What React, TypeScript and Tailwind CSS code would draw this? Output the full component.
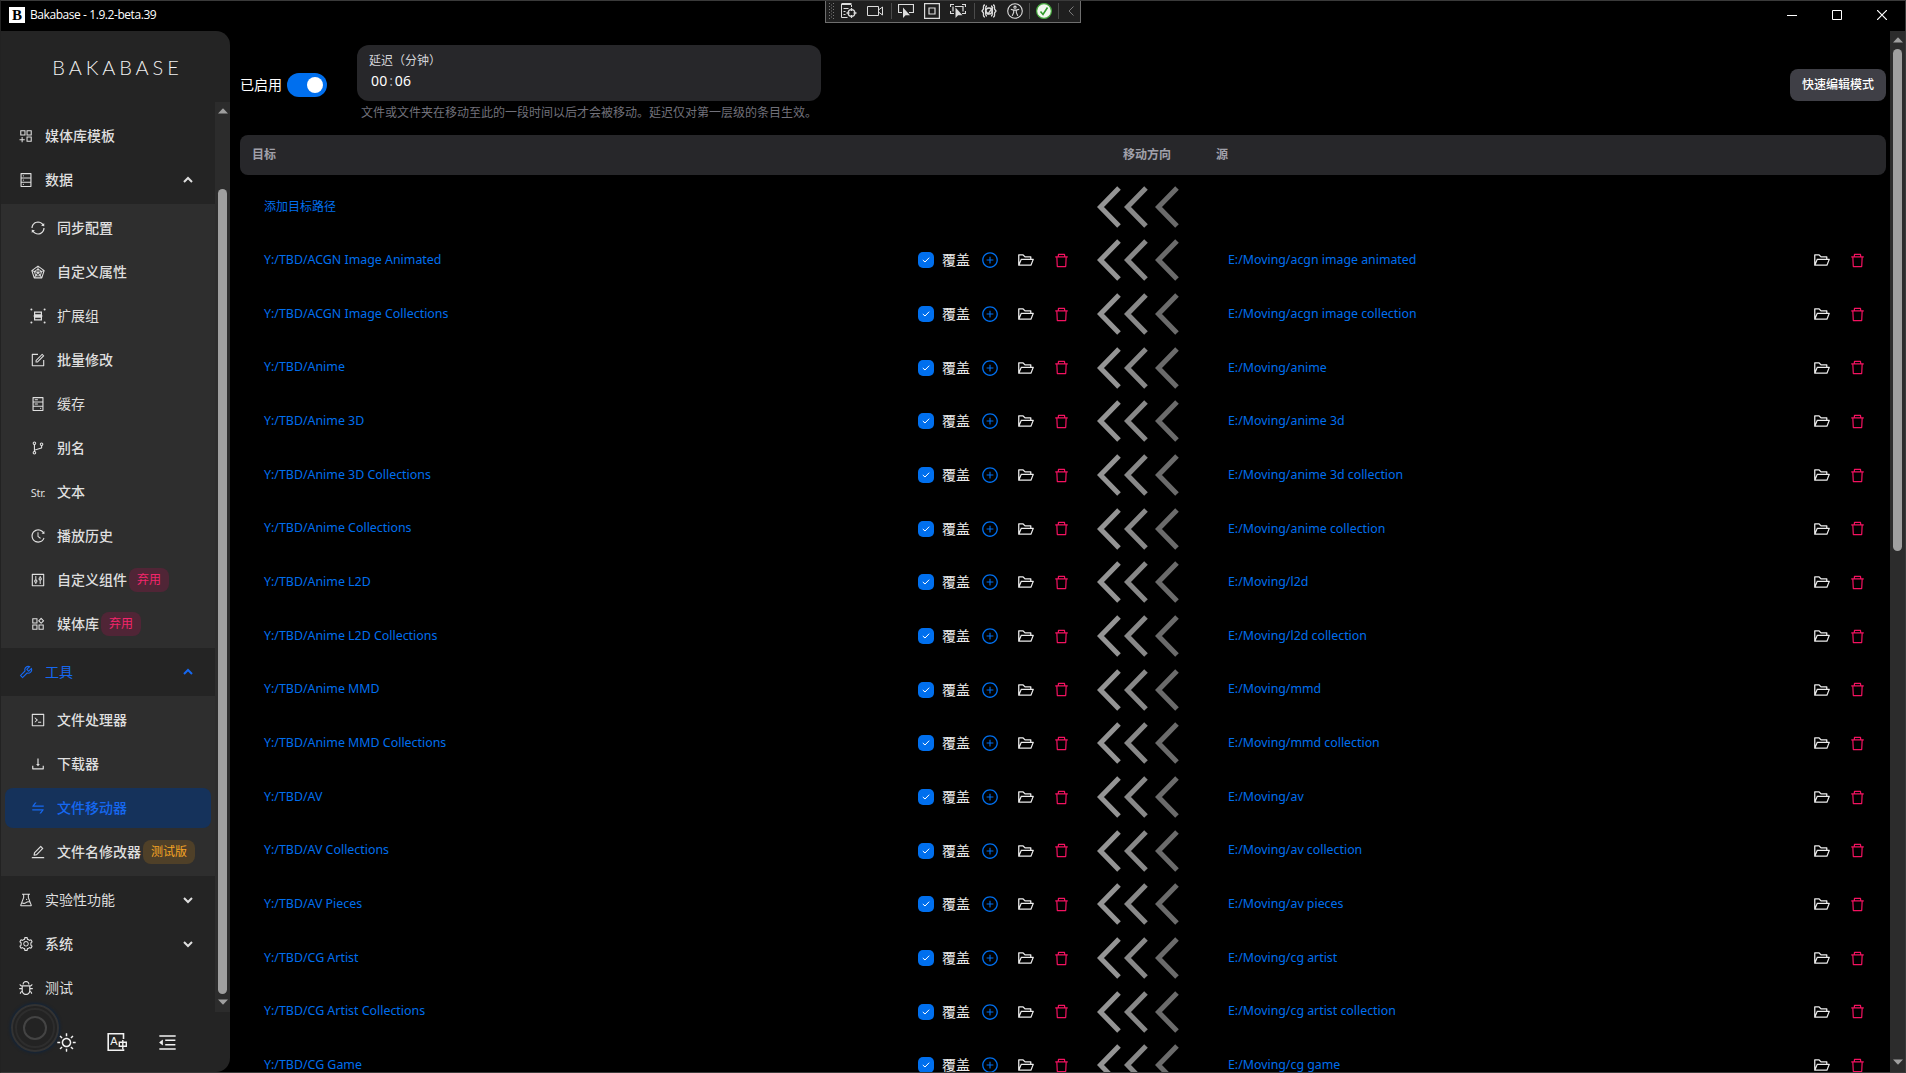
import React, { type ComponentType, type ReactNode } from 'react';
import {
  AiOutlineAppstoreAdd,
  AiOutlineBranches,
  AiOutlineBug,
  AiOutlineCode,
  AiOutlineControl,
  AiOutlineDatabase,
  AiOutlineDelete,
  AiOutlineDownload,
  AiOutlineEdit,
  AiOutlineExperiment,
  AiOutlineFolderOpen,
  AiOutlineForm,
  AiOutlineHdd,
  AiOutlineHistory,
  AiOutlineMenuFold,
  AiOutlinePlusCircle,
  AiOutlineProduct,
  AiOutlineRadarChart,
  AiOutlineSetting,
  AiOutlineSun,
  AiOutlineSwap,
  AiOutlineSync,
  AiOutlineTool,
} from 'react-icons/ai';

type Icon = ComponentType<{ className?: string }>;

const StrIcon: Icon = ({ className = '' }) => (
  <span className={`${className} flex items-center justify-center text-[11px] leading-none font-normal tracking-[-0.3px]`}>Str.</span>
);

const ExtensionGroupIcon: Icon = ({ className = '' }) => (
  <svg viewBox="0 0 16 16" className={className} fill="none" stroke="currentColor" strokeWidth="1.2">
    <path d="M4.600 4.100h6.800v2.700H4.600zM4.600 9.200h6.800v2.700H4.600zM3.500 8h9" />
    <g fill="currentColor" stroke="none">
      <circle cx="1.400" cy="1.400" r="1" />
      <circle cx="14.600" cy="1.400" r="1" />
      <circle cx="1.400" cy="14.600" r="1" />
      <circle cx="14.600" cy="14.600" r="1" />
    </g>
  </svg>
);

function ArrowHead({ up, className = '' }: { up?: boolean; className?: string }) {
  return (
    <svg viewBox="0 0 10 6" className={`h-[6px] w-[10px] ${className}`} fill="#9f9f9f">
      <path d={up ? 'M5 0.3 10 5.5H0z' : 'M5 5.7 10 0.5H0z'} />
    </svg>
  );
}

function Caret({ up }: { up?: boolean }) {
  return (
    <svg viewBox="0 0 10 8" className="mr-[22px] h-2 w-[10px]" fill="none" stroke="currentColor" strokeWidth="2">
      <path d={up ? 'M1 6 5 2l4 4' : 'M1 2l4 4 4-4'} />
    </svg>
  );
}

function TopItem({ icon: I, label, caret, active, thin }: { icon: Icon; label: string; caret?: 'up' | 'down'; active?: boolean; thin?: boolean }) {
  return (
    <div className={`flex h-11 items-center pl-[17px] ${active ? 'text-[#1668f0]' : 'text-[#dfdfdf]'}`}>
      <I className="size-4 shrink-0" />
      <span className={`ml-[11px] flex-1 ${thin ? '' : 'font-medium'}`}>{label}</span>
      {caret && <Caret up={caret === 'up'} />}
    </div>
  );
}

function SubItem({ icon: I, label, active, tag, thin }: { icon: Icon; label: string; active?: boolean; tag?: ReactNode; thin?: boolean }) {
  return (
    <div
      className={`mx-1 flex h-10 shrink-0 items-center rounded-lg pl-[25px] ${
        active ? 'bg-[#15325b] text-[#1668f0]' : 'text-[#dfdfdf]'
      }`}
    >
      <I className="size-4 shrink-0" />
      <span className={`ml-[11px] ${thin ? '' : 'font-medium'}`}>{label}</span>
      {tag}
    </div>
  );
}

const Deprecated = () => (
  <span className="ml-[2px] flex h-6 items-center rounded-lg bg-[#502536] px-2 text-xs text-[#f4256c]">弃用</span>
);
const Beta = () => (
  <span className="ml-[2px] flex h-6 items-center rounded-lg bg-[#4f4028] px-2 text-xs text-[#f5a524]">测试版</span>
);

function Sidebar() {
  return (
    <aside className="ml-px flex w-[229px] shrink-0 flex-col overflow-hidden rounded-r-[14px] bg-[#242424] text-sm">
      <div className="flex h-[71px] shrink-0 items-start justify-center pt-[25px] pl-1">
        <span className="font-['Lato'] text-[20px] leading-[22px] font-light tracking-[3.900px] text-[#f0f0f0]">BAKABASE</span>
      </div>
      <div className="flex h-[910px] shrink-0">
        <nav className="w-[214px] pt-3">
          <TopItem icon={AiOutlineAppstoreAdd} label="媒体库模板" />
          <TopItem icon={AiOutlineDatabase} label="数据" caret="up" />
          <div className="my-0.5 flex flex-col gap-1 bg-[#2e2e2e] py-1">
            <SubItem icon={AiOutlineSync} label="同步配置" />
            <SubItem icon={AiOutlineRadarChart} label="自定义属性" />
            <SubItem icon={ExtensionGroupIcon} label="扩展组" thin />
            <SubItem icon={AiOutlineForm} label="批量修改" />
            <SubItem icon={AiOutlineHdd} label="缓存" thin />
            <SubItem icon={AiOutlineBranches} label="别名" />
            <SubItem icon={StrIcon} label="文本" />
            <SubItem icon={AiOutlineHistory} label="播放历史" />
            <SubItem icon={AiOutlineControl} label="自定义组件" tag={<Deprecated />} />
            <SubItem icon={AiOutlineProduct} label="媒体库" tag={<Deprecated />} />
          </div>
          <TopItem icon={AiOutlineTool} label="工具" caret="up" active thin />
          <div className="my-0.5 flex flex-col gap-1 bg-[#2e2e2e] py-1">
            <SubItem icon={AiOutlineCode} label="文件处理器" />
            <SubItem icon={AiOutlineDownload} label="下载器" />
            <SubItem icon={AiOutlineSwap} label="文件移动器" active />
            <SubItem icon={AiOutlineEdit} label="文件名修改器" tag={<Beta />} />
          </div>
          <TopItem icon={AiOutlineExperiment} label="实验性功能" caret="down" thin />
          <TopItem icon={AiOutlineSetting} label="系统" caret="down" />
          <TopItem icon={AiOutlineBug} label="测试" thin />
        </nav>
        <div className="flex w-[15px] flex-col items-center bg-[#2c2c2c]">
          <ArrowHead up className="mt-[6px]" />
          <div className="mt-[75px] h-[805px] w-[9px] rounded-full bg-[#9f9f9f]" />
          <ArrowHead className="mt-[5px]" />
        </div>
      </div>
      <div className="relative flex h-[60px] items-center gap-[30px] pl-[55px] text-[#f2f2f2]">
        <div className="absolute -top-2 left-[10px] flex size-[48px] items-center justify-center rounded-full border-2 border-[#333] bg-[#232323] shadow-[0_0_3px_1px_#10243c]">
          <div className="flex size-[40px] items-center justify-center rounded-full border-2 border-[#2d2d2d]">
            <div className="size-[24px] rounded-full border-2 border-[#444]" />
          </div>
        </div>
        <AiOutlineSun className="relative size-[21px]" />
        <svg viewBox="0 0 20 20" className="size-5" fill="none" stroke="currentColor" strokeWidth="1.6">
          <path d="M16.500 7V1.800H1.200v16.400h15.300v-1" />
          <path d="M12.300 10.300h7v4h-7zM15.800 8v9.400" strokeWidth="1.400" />
          <text x="3.2" y="12.5" fontSize="11" fontFamily="Liberation Sans" fill="currentColor" stroke="none">A</text>
        </svg>
        <AiOutlineMenuFold className="size-[21px]" />
      </div>
    </aside>
  );
}

function CaptureBar() {
  const sep = <div className="h-4 w-px bg-[#4a4a4a]" />;
  return (
    <div className="absolute -top-px left-[824px] flex h-[23px] w-[256px] items-center border border-[#6e6e6e] bg-[#1f1f1f] pb-px pl-[3px] text-[#dcdcdc]">
      <svg viewBox="0 0 6 18" className="h-[18px] w-[6px]" stroke="#777" strokeDasharray="1 2">
        <path d="M.5 1v16M4.500 1v16" />
        <path d="M2.500 2.500v15" />
      </svg>
      <svg viewBox="0 0 16 16" className="ml-[6px] size-4" fill="none" stroke="currentColor">
        <path d="M.5 1h10" strokeWidth="2" />
        <path d="M.5 1v13.500h6M2.500 5.500h5M2.500 8.500h2M2.500 11.500h2M10.500 2v2" />
        <circle cx="10.500" cy="10" r="3.300" strokeWidth="1.300" />
        <path d="M10.500 5v3M10.500 12v3M5.500 10h3M12.500 10h3" strokeWidth="1.300" />
      </svg>
      <svg viewBox="0 0 16 16" className="ml-[10px] size-4" fill="none" stroke="currentColor">
        <path d="M.5 3.500h11v9H.5zM11.500 7l4-3v8l-4-3" />
      </svg>
      <div className="ml-2">{sep}</div>
      <svg viewBox="0 0 16 16" className="ml-[6px] size-4" fill="none" stroke="currentColor">
        <path d="M4 9.500H.5v-8h15v8H11" strokeWidth="1.200" />
        <path d="M5 4.500v10.500l2.600-2.700H12z" fill="currentColor" stroke="none" />
      </svg>
      <svg viewBox="0 0 16 16" className="ml-[10px] size-4" fill="none" stroke="currentColor" strokeWidth="1.200">
        <path d="M.6.600h14.800v14.800H.6zM5 5h6v6H5z" />
      </svg>
      <svg viewBox="0 0 16 16" className="ml-[10px] size-4" fill="none" stroke="currentColor">
        <path d="M.5 4V1.500H4M12 1.500h3.500V4M.5 8v2.500H4M12 10.500h3.500V8M5 3.500h8v5M3 3.500v5" strokeWidth="1.200" />
        <path d="M5.500 4.500v10.500l2.600-2.700h4.400z" fill="currentColor" stroke="none" />
      </svg>
      <div className="ml-2">{sep}</div>
      <svg viewBox="0 0 16 16" className="ml-[6px] size-4" fill="none" stroke="currentColor" strokeWidth="1.300">
        <path d="M4 2C2 2 2.500 4 2.500 6L1 8l1.500 2c0 2-.5 4 1.500 4M12 2c2 0 1.500 2 1.500 4L15 8l-1.500 2c0 2 .5 4-1.500 4M6 3c-2 0-1 3-1.500 5 .5 2-.5 5 1.500 5M10 3c2 0 1 3 1.500 5-.5 2 .5 5-1.500 5" />
        <path d="M5 8.500 7 11l5-7" />
        <circle cx="8" cy="8" r="3" />
      </svg>
      <svg viewBox="0 0 16 16" className="ml-[10px] size-4" fill="none" stroke="currentColor" strokeWidth="1.100">
        <circle cx="8" cy="8" r="7.300" />
        <circle cx="8" cy="4.200" r="1.100" />
        <path d="m3.800 6.300 2.900.8v2.400l-1.500 3.400M12.200 6.300l-2.900.8v2.400l1.500 3.400M6.700 7.100h2.600" />
      </svg>
      <div className="ml-[6px]">{sep}</div>
      <svg viewBox="0 0 16 16" className="ml-[6px] size-4" fill="none">
        <circle cx="8" cy="8" r="7.400" fill="#f2f8f0" stroke="#44a83c" strokeWidth="1.200" />
        <path d="m4.500 8.500 2.500 3 4.500-7" stroke="#2f9a2a" strokeWidth="1.600" />
      </svg>
      <div className="ml-[6px]">{sep}</div>
      <svg viewBox="0 0 6 10" className="ml-[9px] h-[10px] w-[6px]" fill="none" stroke="#7a7a7a">
        <path d="M5.500.500 1 5l4.500 4.500" />
      </svg>
    </div>
  );
}

function TitleBar() {
  return (
    <header className="flex h-[30px] shrink-0 items-center pb-[2px] pl-2">
      <div className="flex size-4 items-center justify-center bg-white font-['Liberation_Serif'] text-[15px] leading-none font-bold text-black">
        B
      </div>
      <span className="ml-[5px] font-['Open_Sans'] text-[12px] tracking-[-0.43px] text-white">Bakabase - 1.9.2-beta.39</span>
      <div className="mr-[18px] ml-auto flex items-center gap-[35px] text-white">
        <svg viewBox="0 0 10 10" className="size-[10px]" stroke="currentColor"><path d="M0 5.500h10" /></svg>
        <svg viewBox="0 0 10 10" className="size-[10px]" fill="none" stroke="currentColor"><path d="M.5.500h9v9h-9z" /></svg>
        <svg viewBox="0 0 10 10" className="size-[10px]" stroke="currentColor" strokeWidth="1.200"><path d="m0 0 10 10M10 0 0 10" /></svg>
      </div>
    </header>
  );
}

const rows: [string, string][] = [
  ['ACGN Image Animated', 'acgn image animated'],
  ['ACGN Image Collections', 'acgn image collection'],
  ['Anime', 'anime'],
  ['Anime 3D', 'anime 3d'],
  ['Anime 3D Collections', 'anime 3d collection'],
  ['Anime Collections', 'anime collection'],
  ['Anime L2D', 'l2d'],
  ['Anime L2D Collections', 'l2d collection'],
  ['Anime MMD', 'mmd'],
  ['Anime MMD Collections', 'mmd collection'],
  ['AV', 'av'],
  ['AV Collections', 'av collection'],
  ['AV Pieces', 'av pieces'],
  ['CG Artist', 'cg artist'],
  ['CG Artist Collections', 'cg artist collection'],
  ['CG Game', 'cg game'],
];

function Direction() {
  return (
    <svg viewBox="0 0 84 42" className="ml-[6px] h-[42px] w-[84px]" fill="none" strokeWidth="5">
      <path d="M23 2 4.500 21 23 40" stroke="#949494" />
      <path d="M50 2 31.500 21 50 40" stroke="#888888" />
      <path d="M81 2 62.500 21 81 40" stroke="#6b6b6b" />
    </svg>
  );
}

const GRID = 'grid grid-cols-[850px_114px_1fr] items-center';

function Row({ target, source }: { target: string; source: string }) {
  return (
    <div className={`${GRID} h-[53.67px] shrink-0`}>
      <div className="flex items-center pl-6">
        <span className="text-[12.4px] text-[#006fee]">Y:/TBD/{target}</span>
        <div className="mr-[20px] ml-auto flex items-center">
          <div className="flex size-4 items-center justify-center rounded-[5px] bg-[#006fee]">
            <svg viewBox="0 0 8 6" className="h-[6px] w-2" fill="none" stroke="#fff" strokeWidth="1">
              <path d="m.8 3 2.200 2L7.200.700" />
            </svg>
          </div>
          <span className="ml-2 text-sm leading-4 text-[#ececec]">覆盖</span>
          <AiOutlinePlusCircle className="ml-[11px] size-[18px] text-[#006fee]" />
          <AiOutlineFolderOpen className="ml-[18px] size-[18px] text-[#ececec]" />
          <AiOutlineDelete className="ml-[18px] size-[17px] text-[#f31260]" />
        </div>
      </div>
      <Direction />
      <div className="flex items-center pl-6">
        <span className="text-[12.35px] text-[#006fee]">E:/Moving/{source}</span>
        <AiOutlineFolderOpen className="ml-auto size-[18px] text-[#ececec]" />
        <AiOutlineDelete className="mr-[20px] ml-[18px] size-[17px] text-[#f31260]" />
      </div>
    </div>
  );
}

function Main() {
  return (
    <main className="flex min-w-0 flex-1 flex-col overflow-hidden pt-[14px] pr-1 pl-[10px]">
      <div className="flex h-[76px] shrink-0">
        <div className="flex h-[79px] items-center text-sm text-white">
          已启用
          <div className="ml-[5px] flex h-6 w-10 items-center justify-end rounded-full bg-[#006fee] pr-1">
            <div className="size-4 rounded-full bg-white" />
          </div>
        </div>
        <div className="ml-[30px] w-[464px]">
          <div className="flex h-14 flex-col justify-center rounded-[12px] bg-[#27272a] px-3">
            <span className="text-xs leading-4 text-[#d4d4d8]">延迟（分钟）</span>
            <span className="pl-[2px] font-['Noto_Sans'] text-sm leading-6 tracking-[0.3px] text-white">
              00<span className="px-[1.5px] text-[#a1a1aa]">:</span>06
            </span>
          </div>
          <p className="mt-1 pl-1 text-xs leading-4 whitespace-nowrap text-[#71717a]">
            文件或文件夹在移动至此的一段时间以后才会被移动。延迟仅对第一层级的条目生效。
          </p>
        </div>
        <button className="mt-6 ml-auto h-8 w-24 rounded-[8px] bg-[#3f3f46] text-xs font-medium text-white">快速编辑模式</button>
      </div>
      <div className={`${GRID} mt-[14px] h-10 shrink-0 rounded-lg bg-[#27272a] text-xs font-semibold text-[#a1a1aa]`}>
        <span className="pl-3">目标</span>
        <span className="text-center">移动方向</span>
        <span className="pl-3">源</span>
      </div>
      <div className="mt-[5px] flex min-h-0 flex-1 flex-col overflow-hidden">
        <div className={`${GRID} h-[53.67px] shrink-0`}>
          <span className="pl-6 text-xs text-[#006fee]">添加目标路径</span>
          <Direction />
          <span />
        </div>
        {rows.map(([t, s]) => (
          <Row key={t} target={t} source={s} />
        ))}
      </div>
    </main>
  );
}

export default function App() {
  return (
    <div className="relative flex h-[1073px] w-[1906px] flex-col overflow-hidden border border-t-[#3a3a3a] border-r-[#3a3a3a] border-b-[#3a3a3a] border-l-[#222] bg-black font-['Noto_Sans','Noto_Sans_CJK_SC',sans-serif]">
      <TitleBar />
      <div className="-ml-px flex min-h-0 flex-1">
        <Sidebar />
        <Main />
        <div className="flex w-[15px] shrink-0 flex-col items-center bg-[#2c2c2c]">
          <ArrowHead up className="mt-[6px]" />
          <div className="mt-[6px] h-[502px] w-[9px] rounded-full bg-[#9f9f9f]" />
          <ArrowHead className="mt-auto mb-[7px]" />
        </div>
      </div>
      <CaptureBar />
    </div>
  );
}
